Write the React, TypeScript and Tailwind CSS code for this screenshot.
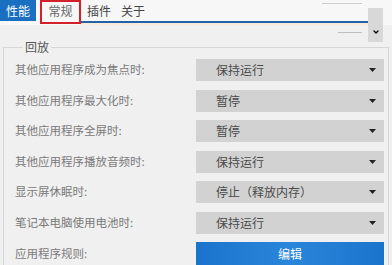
import { ChevronDown } from 'lucide-react'

const rows = [
  { label: '其他应用程序成为焦点时:', value: '保持运行' },
  { label: '其他应用程序最大化时:', value: '暂停' },
  { label: '其他应用程序全屏时:', value: '暂停' },
  { label: '其他应用程序播放音频时:', value: '保持运行' },
  { label: '显示屏休眠时:', value: '停止（释放内存）' },
  { label: '笔记本电脑使用电池时:', value: '保持运行' },
]

const Arrow = () => (
  <svg width="7" height="4" viewBox="0 0 7 4" className="shrink-0">
    <path d="M0 0h7L3.5 4z" fill="#222" />
  </svg>
)

export default function App() {
  return (
    <div
      className="relative h-[265px] w-[392px] overflow-hidden bg-[#f0f0f0] text-[12px] text-[#444]"
      style={{ fontFamily: '"Noto Sans CJK SC", "Noto Sans", sans-serif' }}
    >
      {/* tab strip */}
      <div className="flex h-[25px] items-start bg-[#f7f7f7]">
        <div className="flex h-[21px] w-[36px] items-center justify-center bg-[#1a6fc0] text-white">性能</div>
        <div className="ml-[4px] flex h-[24px] w-[41px] items-center justify-center border-2 border-[#d3202a] pb-[2px] text-[#666]">
          常规
        </div>
        <div className="flex h-[25px] flex-1 flex-col">
          <div className="flex h-[21px] items-center gap-[10px] pl-[6px]">
            <span>插件</span>
            <span>关于</span>
          </div>
          <div className="mr-[18px] h-[2px] bg-[#1f64a8]" />
          <div className="mr-[18px] h-[2px] bg-[#fbe9de]" />
        </div>
      </div>

      {/* little collapsed combo at top right */}
      <div className="absolute right-[9px] top-[8px] flex h-[34px] w-[15px] items-end justify-center bg-[#d8d8d8] pb-[6px]">
        <ChevronDown className="h-[8px] w-[8px] text-black" strokeWidth={4} />
      </div>
      <div className="absolute right-[30px] top-[3px] h-px w-[40px] bg-[#cfcfcf]" />
      <div className="absolute right-[30px] top-[32px] h-px w-[24px] bg-[#bdbdbd]" />

      <fieldset className="mx-[3px] mt-[15px] w-[386px] border border-[#d6d6d6] pb-[10px] pl-[11px] pr-[4px]">
        <legend className="ml-[8px] px-[2px] text-[12px] leading-[14px] text-[#555]">回放</legend>
        <div className="mt-[5px] flex flex-col gap-[8.5px]">
          {rows.map((row) => (
            <div key={row.label} className="flex h-[22px] items-center">
              <span className="w-[181px] text-[11.5px] text-[#7a7a7a]">{row.label}</span>
              <div className="flex h-[22px] flex-1 items-center justify-between bg-[#d2d2d2] pl-[20px] pr-[8px] text-[12px] text-[#4a4a4a]">
                <span>{row.value}</span>
                <Arrow />
              </div>
            </div>
          ))}
          <div className="flex h-[24px] items-center">
            <span className="w-[181px] text-[11.5px] text-[#7a7a7a]">应用程序规则:</span>
            <div className="flex h-[24px] flex-1 items-center justify-center bg-gradient-to-r from-[#1b74cc] via-[#2a86da] to-[#1a74cc] text-[12px] text-white">
              编辑
            </div>
          </div>
        </div>
      </fieldset>
    </div>
  )
}
